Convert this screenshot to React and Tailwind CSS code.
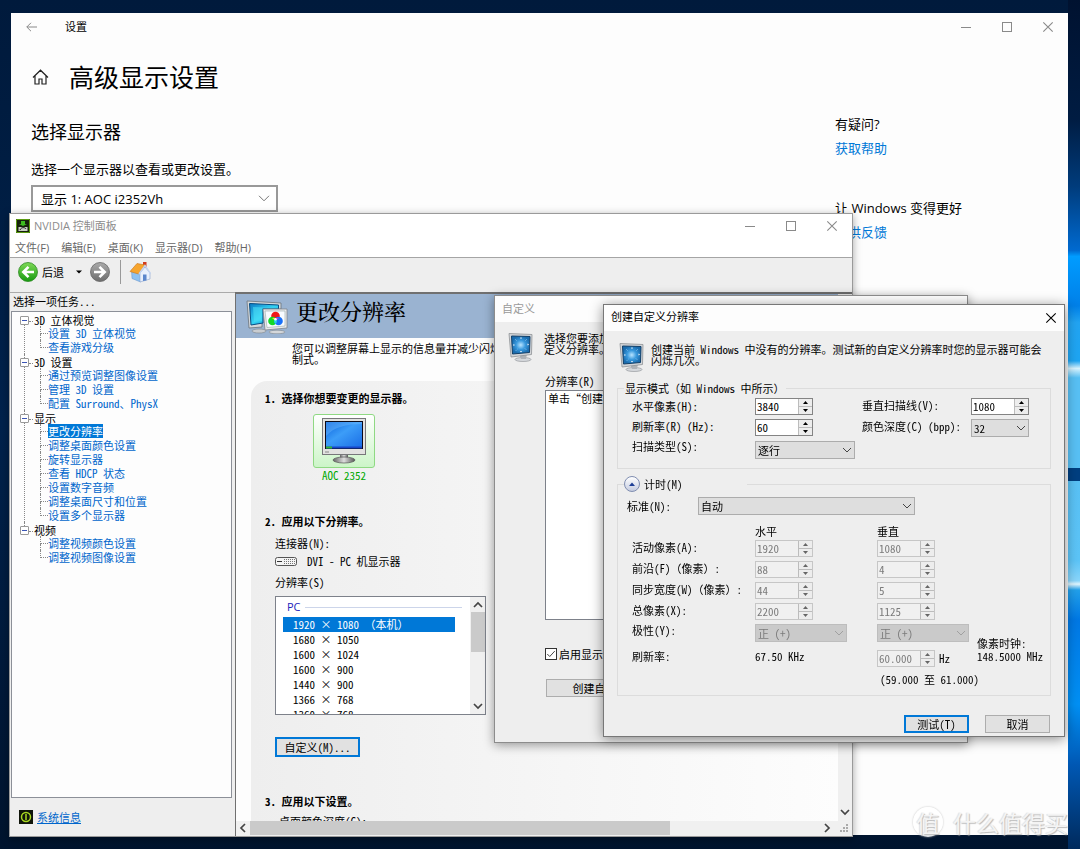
import React from "react";

const SONG = "font-['Noto_Sans_Mono_CJK_SC','Noto_Sans_CJK_SC',sans-serif]";
const UI = "font-['Open_Sans','Noto_Sans_CJK_SC',sans-serif]";

const tasks = [
  { name: "3D 立体视觉", items: ["设置 3D 立体视觉", "查看游戏分级"] },
  { name: "3D 设置", items: ["通过预览调整图像设置", "管理 3D 设置", "配置 Surround、PhysX"] },
  {
    name: "显示",
    items: ["更改分辨率", "调整桌面颜色设置", "旋转显示器", "查看 HDCP 状态", "设置数字音频", "调整桌面尺寸和位置", "设置多个显示器"],
  },
  { name: "视频", items: ["调整视频颜色设置", "调整视频图像设置"] },
];

const resolutions = ["1920 × 1080 （本机）", "1680 × 1050", "1600 × 1024", "1600 × 900", "1440 × 900", "1366 × 768", "1360 × 768"];

function Chevron({ dir = "down", thin = false, className = "" }) {
  const d = { down: "M1 3l4 4 4-4", up: "M1 7l4-4 4 4", left: "M7 1L3 5l4 4", right: "M3 1l4 4-4 4" }[dir];
  return (
    <svg viewBox="0 0 10 10" className={`size-2.5 ${className}`} fill="none" stroke="currentColor" strokeWidth={thin ? 1 : 1.7}>
      <path d={d} />
    </svg>
  );
}

function CaptionButtons() {
  return (
    <div className="flex items-center gap-[31px] text-[#8a8a8a]">
      <button aria-label="最小化" className="flex size-2.5 items-center">
        <svg viewBox="0 0 10 10" className="size-2.5" stroke="currentColor"><path d="M0 5.5h10" /></svg>
      </button>
      <button aria-label="最大化" className="size-2.5 border border-[#8a8a8a]" />
      <button aria-label="关闭"><CloseGlyph /></button>
    </div>
  );
}

function CloseGlyph({ className = "" }) {
  return (
    <svg viewBox="0 0 10 10" className={`size-2.5 overflow-visible ${className}`} stroke="currentColor" strokeWidth="1.1">
      <path d="M.3.3l9.4 9.4M9.7.3L.3 9.7" />
    </svg>
  );
}

function Spin({ id, label, value, disabled = false, autoFocus = false }) {
  return (
    <div className={`flex h-[17px] w-[58px] border ${disabled ? "border-[#c6c6c6] bg-[#f0f0f0] text-[#7b7b7b]" : "border-[#848484] bg-white"}`}>
      <input id={id} aria-label={label} defaultValue={value} disabled={disabled} autoFocus={autoFocus} className="w-0 min-w-0 flex-1 bg-transparent pl-px text-[11px] leading-[15px] outline-none" />
      <div className="flex w-3.5 flex-col border-l border-[#bcbcbc] bg-[#ededed]">
        <button aria-label="增加" disabled={disabled} className="flex flex-1 items-center justify-center border-b border-[#bcbcbc]">
          <svg viewBox="0 0 5 3" className="h-[3px] w-[5px]" fill={disabled ? "#666" : "#000"}><path d="M0 3h5L2.5 0z" /></svg>
        </button>
        <button aria-label="减少" disabled={disabled} className="flex flex-1 items-center justify-center">
          <svg viewBox="0 0 5 3" className="h-[3px] w-[5px]" fill={disabled ? "#666" : "#000"}><path d="M0 0h5L2.5 3z" /></svg>
        </button>
      </div>
    </div>
  );
}

function Combo({ id, label, value, width, disabled = false }) {
  return (
    <div className={`relative h-[18px] ${width}`}>
      <select
        id={id}
        aria-label={label}
        disabled={disabled}
        className={`size-full appearance-none border pl-0.5 text-[11px] leading-4 opacity-100 ${disabled ? "border-[#bdbdbd] bg-[#cacaca] text-[#7b7b7b]" : "border-[#acacac] bg-[#dedede] text-black"}`}
      >
        <option>{value}</option>
      </select>
      <Chevron thin className={`pointer-events-none absolute right-[3px] top-1 ${disabled ? "text-[#a0a0a0]" : "text-[#444]"}`} />
    </div>
  );
}

function SizeIcon() {
  return (
    <svg viewBox="0 0 26 30" className="h-[30px] w-[26px] shrink-0">
      <defs>
        <radialGradient id="sizeGlow"><stop offset="0" stopColor="#b8e4ff" /><stop offset=".5" stopColor="#3a9ade" /><stop offset="1" stopColor="#1a6cae" /></radialGradient>
      </defs>
      <ellipse cx="15" cy="27.5" rx="8" ry="2" fill="#d5d8dc" stroke="#8b8f94" strokeWidth=".6" />
      <path d="M11 22h8l-1 5h-5z" fill="#aeb2b7" />
      <path d="M1 1.5l23 1-.5 20L3 25z" fill="#d3d5d8" stroke="#8e9296" strokeWidth=".8" />
      <path d="M3.5 4l18.5.5-.5 16L4.5 22z" fill="url(#sizeGlow)" stroke="#123f68" strokeWidth="1" />
      <path d="M13 5l1 1.500h-2zM13 20.500l1-1.500h-2zM4.800 13l1.500-1v2zM21 12.500l-1.500-1v2z" fill="#fff" />
      <path d="M7 7l2 2M19 7l-2 2M7.500 19l2-2M18.500 18l-2-2" stroke="#9fd4fa" strokeDasharray="1 1" strokeWidth=".7" />
    </svg>
  );
}

function HeaderIcon() {
  return (
    <svg viewBox="0 0 42 34" className="h-[34px] w-[42px] shrink-0">
      <defs>
        <linearGradient id="hdrScreen" x1="0" y1="0" x2="1" y2="1"><stop offset="0" stopColor="#0b7ac4" /><stop offset=".5" stopColor="#35d3f3" /><stop offset="1" stopColor="#0a86d0" /></linearGradient>
      </defs>
      <path d="M1 1l34 2v6L16 10v17L3 28z" fill="#d4d8db" stroke="#6b737b" strokeWidth=".8" />
      <path d="M3.500 3.500l29 1.500v4H17v14L5 25z" fill="url(#hdrScreen)" stroke="#084d83" />
      <path d="M7 7l22 1H16v13l-8 1z" fill="#4be0f6" opacity=".6" />
      <path d="M17 9h24v19l-22 2z" fill="#e8eaec" stroke="#7d848b" strokeWidth=".8" />
      <path d="M19 11h20v15l-18 1.500z" fill="#f8fbff" stroke="#9aa" strokeWidth=".6" />
      <circle cx="29.500" cy="16" r="4.300" fill="#f01818" />
      <circle cx="26.500" cy="21" r="4.300" fill="#12d828" />
      <circle cx="32.500" cy="21" r="4.300" fill="#1870f8" />
      <path d="M26 18.200a4.300 4.300 0 0 1 3.500 0l-1.300 1.600z" fill="#f5e020" />
      <path d="M33 18.200a4.300 4.300 0 0 0-3.500 0l1.300 1.600z" fill="#d030d8" />
      <path d="M29.500 18a4.300 4.300 0 0 0 0 6 4.300 4.300 0 0 0 0-6z" fill="#28d8e0" />
      <circle cx="29.500" cy="19.300" r="1.200" fill="#fff" />
      <ellipse cx="13" cy="31" rx="7" ry="2" fill="#c9cdd1" stroke="#7c848c" strokeWidth=".6" />
      <ellipse cx="31" cy="32" rx="8" ry="1.800" fill="#d5d8db" stroke="#7c848c" strokeWidth=".6" />
    </svg>
  );
}

function DisplayIcon() {
  return (
    <svg viewBox="0 0 44 46" className="h-[46px] w-11">
      <defs>
        <linearGradient id="lcd" x1="0" y1="0" x2="1" y2="1"><stop offset="0" stopColor="#0b63dd" /><stop offset=".45" stopColor="#3c9df8" /><stop offset="1" stopColor="#1a6ee6" /></linearGradient>
        <linearGradient id="stand" x1="0" x2="1"><stop offset="0" stopColor="#666" /><stop offset=".5" stopColor="#ddd" /><stop offset="1" stopColor="#555" /></linearGradient>
      </defs>
      <rect x=".5" y=".5" width="43" height="36" fill="#e2e2e0" stroke="#77777a" />
      <rect x="3" y="3" width="38" height="28" fill="#0a0a18" />
      <rect x="4" y="4" width="36" height="25" fill="url(#lcd)" />
      <path d="M4 18c8-9 20-12 36-12V4H4z" fill="#7cc2ff" opacity=".35" />
      <path d="M4 28.500h36v2H4z" fill="#1746c8" />
      <path d="M4 28.500h6v2H4z" fill="#35b53a" />
      <path d="M3 34h4" stroke="#888" />
      <path d="M18 37h8v4h-8z" fill="url(#stand)" />
      <ellipse cx="22" cy="42" rx="11" ry="3" fill="url(#stand)" stroke="#555" strokeWidth=".7" />
    </svg>
  );
}

function Wallpaper() {
  return (
    <div className="absolute inset-0 bg-gradient-to-b from-[#001a3c] via-[#00224c] to-[#00142e]">
      <svg viewBox="0 0 12 849" preserveAspectRatio="none" className="absolute right-0 top-0 h-full w-3">
        <defs>
          <linearGradient id="beam" x1="0" y1="0" x2="0" y2="1">
            <stop offset="0" stopColor="#001230" />
            <stop offset=".14" stopColor="#001c42" />
            <stop offset=".22" stopColor="#003c7c" />
            <stop offset=".295" stopColor="#006ad0" />
            <stop offset=".302" stopColor="#009cff" />
            <stop offset=".36" stopColor="#0080e8" />
            <stop offset=".38" stopColor="#22a4f2" />
            <stop offset=".425" stopColor="#1ea5f2" />
            <stop offset=".434" stopColor="#d8f4ff" />
            <stop offset=".445" stopColor="#58c0f4" />
            <stop offset=".54" stopColor="#58c0f4" />
            <stop offset=".66" stopColor="#5cc4f7" />
            <stop offset=".684" stopColor="#8ad6fb" />
            <stop offset=".688" stopColor="#e0f6ff" />
            <stop offset=".695" stopColor="#22a0ea" />
            <stop offset=".73" stopColor="#0078e4" />
            <stop offset=".83" stopColor="#0090f4" />
            <stop offset=".9" stopColor="#0058b4" />
            <stop offset="1" stopColor="#002a5c" />
          </linearGradient>
        </defs>
        <path d="M0 0h12v849H0z" fill="url(#beam)" />
        <path d="M0 468h12v13H0z" fill="#003f80" />
      </svg>
    </div>
  );
}

function SettingsWindow() {
  return (
    <section className={`absolute bottom-[14px] left-[11px] right-3 top-[13px] bg-[#fdfdfd] text-[13px] text-black ${UI}`}>
      <header className="flex h-7 items-center justify-between pl-[15px] pr-[15px]">
        <div className="flex items-center gap-7">
          <button aria-label="返回" className="text-[#8a8a8a]">
            <svg viewBox="0 0 11 10" className="h-2.5 w-[11px]" fill="none" stroke="currentColor"><path d="M11 5H.8M5 .8L.8 5 5 9.200" /></svg>
          </button>
          <span className="pt-px text-[11px]">设置</span>
        </div>
        <CaptionButtons />
      </header>
      <div className="flex justify-between pl-5">
        <div className="pt-4">
          <div className="flex items-center gap-5 pl-px">
            <svg viewBox="0 0 17 16" className="h-4 w-[17px]" fill="none" stroke="#222" strokeWidth="1.200"><path d="M1 8.500L8.500 1.200 16 8.500M3 7v8h4v-5h3v5h4V7" /></svg>
            <h1 className="text-[25px] leading-10">高级显示设置</h1>
          </div>
          <h2 className="mt-[23px] text-lg leading-6">选择显示器</h2>
          <label htmlFor="monitor" className="mt-[15px] block leading-5">选择一个显示器以查看或更改设置。</label>
          <div className="relative mt-1.5 h-[27px] w-[247px]">
            <select id="monitor" className="size-full appearance-none border-2 border-[#999] bg-white pl-2 text-[13px] leading-5 text-black">
              <option>显示 1: AOC i2352Vh</option>
            </select>
            <svg viewBox="0 0 12 7" className="pointer-events-none absolute right-2 top-2.5 h-[7px] w-3" fill="none" stroke="#777"><path d="M1 .8l5 5 5-5" /></svg>
          </div>
        </div>
        <aside className="w-[233px] pt-[73px] leading-5">
          <p>有疑问?</p>
          <a href="#help" className="mt-1 block text-[#0078d7]">获取帮助</a>
          <p className="mt-10">让 Windows 变得更好</p>
          <a href="#feedback" className="mt-1 block text-[#0078d7]">提供反馈</a>
        </aside>
      </div>
    </section>
  );
}

function TaskTree() {
  return (
    <ul className="flex-1 border border-[#8c9098] bg-[#fdfdfd] pl-2 leading-[14px]">
      {tasks.map((group, g) => (
        <li key={group.name} className="flex">
          <span className="flex w-[9px] flex-col items-center">
            <span className={`h-1 border-l border-dotted ${g ? "border-[#888]" : "border-transparent"}`} />
            <button aria-label="折叠" className="flex size-[9px] shrink-0 items-center justify-center rounded-[1px] border border-[#999] bg-white"><span className="h-px w-[5px] bg-[#3b55b5]" /></button>
            {g < tasks.length - 1 && <span className="flex-1 border-l border-dotted border-[#888]" />}
          </span>
          <div>
            <div className="flex h-3.5 items-end leading-3"><span className="mb-1 mr-px w-1 border-t border-dotted border-[#888]" />{group.name}</div>
            <ul className="pl-[11px]">
              {group.items.map((item, i) => (
                <li key={item} className="flex h-3.5">
                  <span className="flex w-2 flex-col">
                    <span className="h-2 border-b border-l border-dotted border-[#888]" />
                    {i < group.items.length - 1 && <span className="flex-1 border-l border-dotted border-[#888]" />}
                  </span>
                  <a href="#task" className={item === "更改分辨率" ? "bg-[#0078d7] text-white" : "text-[#0066cc]"}>{item}</a>
                </li>
              ))}
            </ul>
          </div>
        </li>
      ))}
    </ul>
  );
}

function NvidiaWindow() {
  return (
    <section className={`absolute bottom-3 left-[9px] top-[213px] flex w-[844px] flex-col border border-[#9a9a9a] bg-[#eee] text-[11px] text-black shadow-[0_2px_8px_rgba(0,0,0,0.35)] ${SONG}`}>
      <header className={`flex h-[26px] items-center justify-between bg-white pb-0.5 pl-1.5 pr-[15px] text-[#8c8c8c] ${UI}`}>
        <div className="flex items-center gap-1">
          <svg viewBox="0 0 14 14" className="size-3.5"><path d="M0 0h14v14H0z" fill="#16210c" /><path d="M.5.5h13v13H.5z" fill="none" stroke="#5a9a10" /><path d="M5 2h4v3h2L7 7 3 5h2z" fill="#3dbb20" /><path d="M2.500 8h9v4h-9z" fill="#c8ccc4" /><path d="M4 11c1-3 5-3 6-1" stroke="#222" fill="none" /></svg>
          <span>NVIDIA 控制面板</span>
        </div>
        <CaptionButtons />
      </header>
      <nav className={`flex h-[17px] items-center gap-3 bg-white pb-px pl-[5px] text-[#666] ${UI}`}>
        <button>文件(F)</button><button>编辑(E)</button><button>桌面(K)</button><button>显示器(D)</button><button>帮助(H)</button>
      </nav>
      <div className="flex h-[35px] items-center border-t border-[#a5a5a5] pb-1.5 pl-2">
        <button className="flex items-center gap-1">
          <svg viewBox="0 0 20 20" className="size-5">
            <defs><linearGradient id="go" x1="0" y1="0" x2="0" y2="1"><stop offset="0" stopColor="#7ed957" /><stop offset="1" stopColor="#179a10" /></linearGradient></defs>
            <circle cx="10" cy="10" r="9.500" fill="url(#go)" stroke="#2c8a22" strokeWidth=".8" />
            <path d="M10.500 4.800L5.300 10l5.200 5.200M5.500 10H16" fill="none" stroke="#fff" strokeWidth="2.600" />
          </svg>
          后退
        </button>
        <button aria-label="历史" className="ml-3"><svg viewBox="0 0 6 4" className="h-1 w-1.5"><path d="M0 .5h6l-3 3z" /></svg></button>
        <button aria-label="前进" className="ml-2">
          <svg viewBox="0 0 20 20" className="size-5">
            <defs><linearGradient id="off" x1="0" y1="0" x2="0" y2="1"><stop offset="0" stopColor="#aaa" /><stop offset="1" stopColor="#6e6e6e" /></linearGradient></defs>
            <circle cx="10" cy="10" r="9.500" fill="url(#off)" stroke="#666" strokeWidth=".8" />
            <path d="M9.500 4.800l5.200 5.200-5.200 5.200M14.500 10H4" fill="none" stroke="#fff" strokeWidth="2.600" />
          </svg>
        </button>
        <span className="ml-2.5 h-6 w-px bg-[#999]" />
        <button aria-label="主页" className="ml-2">
          <svg viewBox="0 0 22 22" className="size-[22px]">
            <path d="M14 1h3.500v6H14z" fill="#d23a1c" />
            <path d="M2.500 9l5-1 4 5v8L3 17.500z" fill="#8ec2f2" stroke="#5f8fc8" strokeWidth=".5" />
            <path d="M11 12l5-6 5 6v6L11 21z" fill="#e7effc" stroke="#8aa3cc" strokeWidth=".6" />
            <path d="M1 10.500L8 2.500l8 1.500L9.500 13z" fill="#f6a52e" stroke="#c9731a" strokeWidth=".6" />
            <path d="M10 13l6-8.500 5.500 8" fill="none" stroke="#c2d3ef" strokeWidth="1.500" />
            <path d="M14 13.500h3.500v6l-3.500.5z" fill="#5a86cc" />
          </svg>
        </button>
      </div>
      <div className="flex min-h-0 flex-1">
        <div className="flex w-[225px] shrink-0 flex-col border-t border-[#aaa] pl-px pr-[3px]">
          <h2 className="h-[18px] pl-0.5 leading-4">选择一项任务...</h2>
          <TaskTree />
          <footer className="flex h-[38px] items-center gap-1 pl-2">
            <svg viewBox="0 0 14 14" className="size-3.5"><path d="M0 0h14v14H0z" fill="#10150a" /><circle cx="7" cy="7" r="4.500" fill="none" stroke="#a8d820" strokeWidth="1.500" /><path d="M7 4v6" stroke="#a8d820" strokeWidth="1.500" /></svg>
            <a href="#info" className="text-[#0066cc] underline">系统信息</a>
          </footer>
        </div>
        <main className="flex min-w-0 flex-1 flex-col border-l border-t-2 border-[#707070] bg-[#fdfdfd]">
          <div className="flex min-h-0 flex-1">
            <div className="min-w-0 flex-1 overflow-hidden">
              <header className="flex h-11 items-center gap-2 bg-[#9ab3d1] pl-2.5 pt-0.5">
                <HeaderIcon />
                <h1 className="pb-3 font-['Noto_Serif_CJK_SC','Noto_Sans_CJK_SC',serif] text-[22px] font-medium leading-8">更改分辨率</h1>
              </header>
              <p className="whitespace-nowrap pl-14 pt-[5px] leading-[11px]">您可以调整屏幕上显示的信息量并减少闪烁。您还可以选择高清电视（HDTV）<br />制式。</p>
              <div className="ml-[15px] mt-4 h-[520px] rounded-tl-2xl bg-gradient-to-r from-[#eee] to-[#fdfdfd] pl-3.5 pt-[9px]">
                <h3 className="whitespace-pre font-bold leading-4">1. 选择你想要变更的显示器。</h3>
                <button className="ml-12 mt-2 block text-[#00a800]">
                  <span className="mx-auto flex h-[54px] w-[62px] items-center justify-center rounded-[3px] border border-[#8fd983] bg-gradient-to-b from-white to-[#ccf5c8]"><DisplayIcon /></span>
                  <span className="block leading-[14px]">AOC 2352</span>
                </button>
                <h3 className="mt-[31px] whitespace-pre font-bold leading-4">2. 应用以下分辨率。</h3>
                <div className="pl-2.5">
                  <p className="mt-1.5 leading-4">连接器(N):</p>
                  <p className="mt-0.5 flex items-center gap-2.5 leading-4">
                    <svg viewBox="0 0 22 9" className="h-[9px] w-[22px]"><rect x=".5" y=".5" width="21" height="8" rx="2" fill="#f4f4f4" stroke="#555" /><path d="M2 4.500h5" stroke="#333" /><path d="M9 2.500h11M9 4.500h11M9 6.500h11" stroke="#777" strokeDasharray="1 1" /></svg>
                    DVI - PC 机显示器
                  </p>
                  <p className="mt-[5px] leading-4">分辨率(S)</p>
                  <div className="mt-1.5 flex h-[119px] w-[211px] border border-[#7d818a] bg-white">
                    <div className="flex-1 overflow-hidden pl-[7px]">
                      <div className={`flex h-5 items-center gap-1 pl-1 text-[#2222bb] ${UI}`}>PC<span className="mr-2 h-px flex-1 bg-[#ccd5ea]" /></div>
                      <ul>
                        {resolutions.map((r, i) => (
                          <li key={r} className={`mr-[15px] h-[15px] whitespace-pre pl-2.5 leading-[15px] ${i ? "" : "bg-[#0078d7] text-white"}`}>{r}</li>
                        ))}
                      </ul>
                    </div>
                    <div className="flex w-[15px] flex-col items-center bg-[#f0f0f0] py-[3px] text-[#444]">
                      <Chevron dir="up" />
                      <span className="mt-0.5 h-10 w-3.5 bg-[#cacaca]" />
                      <Chevron className="mt-auto" />
                    </div>
                  </div>
                  <button className="mt-[22px] h-5 w-[85px] border-2 border-[#0078d7] bg-[#e1e1e1] leading-4">自定义(M)...</button>
                </div>
                <h3 className="mt-9 whitespace-pre font-bold leading-4">3. 应用以下设置。</h3>
                <p className="mt-1 pl-3.5 leading-4">桌面颜色深度(C):</p>
              </div>
            </div>
            <div className="flex w-3.5 flex-col items-center justify-end bg-[#f0f0f0] pb-1 text-[#444]"><Chevron /></div>
          </div>
          <div className="flex h-[15px] items-center bg-[#f0f0f0] pb-px text-[#444]">
            <Chevron dir="left" className="mx-0.5 shrink-0" />
            <span className="h-full w-[420px] bg-[#cacaca]" />
            <Chevron dir="right" className="ml-auto mr-2" />
            <svg viewBox="0 0 8 8" className="mr-1 size-2" fill="#aaa"><path d="M6 0h2v2H6zM3 3h2v2H3zM6 3h2v2H6zM0 6h2v2H0zM3 6h2v2H3zM6 6h2v2H6z" /></svg>
          </div>
        </main>
      </div>
    </section>
  );
}

function CustomizeDialog() {
  return (
    <section className={`absolute left-[494px] top-[295px] h-[448px] w-[474px] border border-[#8c8c8c] bg-[#eee] text-[11px] text-black shadow-[0_2px_10px_rgba(0,0,0,0.4)] ${SONG}`}>
      <header className={`flex h-[26px] items-center bg-[#fdfdfd] pl-[7px] text-[#999] ${UI}`}>自定义</header>
      <div className="flex gap-2.5 pl-[13px] pt-2.5">
        <SizeIcon />
        <p className="whitespace-nowrap pt-px leading-[11px]">选择您要添加到显示列表中的分辨率。您还可以创建自<br />定义分辨率。</p>
      </div>
      <div className="pl-[50px] pr-4">
        <p className="mt-[11px] leading-4">分辨率(R)</p>
        <div className="mt-px h-[230px] border border-[#7d818a] bg-white pl-0.5 leading-[14px]">单击“创建自定义分辨率”以添加新的分辨率。</div>
        <label className="mt-[26px] flex h-4 items-center gap-0.5"><input type="checkbox" defaultChecked className="peer sr-only" /><svg viewBox="0 0 12 12" className="size-3 border border-[#333] bg-white" fill="none" stroke="#222"><path d="M1.500 6l3 3L10.500 2.500" /></svg>启用显示器未显示的分辨率(E)</label>
        <button className="ml-px mt-[17px] h-[18px] w-[174px] border border-[#adadad] bg-[#e1e1e1] leading-4">创建自定义分辨率(C)...</button>
      </div>
    </section>
  );
}

const timingRows = [
  ["active", "活动像素(A):", "1920", "1080"],
  ["porch", "前沿(F)（像素）:", "88", "4"],
  ["sync", "同步宽度(W)（像素）:", "44", "5"],
  ["total", "总像素(X):", "2200", "1125"],
];

function CreateDialog() {
  return (
    <section className={`absolute left-[603px] top-[304px] w-[462px] border border-[#777] bg-[#eee] pb-[3px] text-[11px] text-black shadow-[0_2px_12px_rgba(0,0,0,0.45)] ${SONG}`}>
      <header className={`flex h-[26px] items-center justify-between bg-[#fdfdfd] pb-px pl-[7px] pr-2 ${UI}`}>
        <h2>创建自定义分辨率</h2>
        <button aria-label="关闭"><CloseGlyph /></button>
      </header>
      <div className="flex gap-1.5 pl-[15px] pt-[11px]">
        <SizeIcon />
        <p className="whitespace-nowrap pt-0.5 leading-[11px]">创建当前 Windows 中没有的分辨率。测试新的自定义分辨率时您的显示器可能会<br />闪烁几次。</p>
      </div>
      <fieldset className="mx-[13px] mt-2 h-[89px] border border-[#dcdcdc] px-1.5">
        <legend className="px-px leading-4">显示模式（如 Windows 中所示）</legend>
        <div className="flex pl-2 pt-0.5">
          <div className="grid grid-cols-[123px_100px] grid-rows-[21px_22px_22px]">
            <label htmlFor="hpx" className="leading-4">水平像素(H):</label><Spin id="hpx" value="3840" autoFocus />
            <label htmlFor="rate" className="leading-[14px]">刷新率(R) (Hz):</label><Spin id="rate" value="60" />
            <label htmlFor="scan" className="leading-[10px]">扫描类型(S):</label><Combo id="scan" value="逐行" width="w-[100px]" />
          </div>
          <div className="ml-[7px] grid grid-cols-[109px_58px] grid-rows-[21px_22px_22px]">
            <label htmlFor="vln" className="leading-[14px]">垂直扫描线(V):</label><Spin id="vln" value="1080" />
            <label htmlFor="bpp" className="leading-[14px]">颜色深度(C) (bpp):</label><Combo id="bpp" value="32" width="w-[58px]" />
          </div>
        </div>
      </fieldset>
      <fieldset className="mx-[13px] mt-1.5 border border-[#dcdcdc] px-1.5 pb-2">
        <legend className="flex h-[18px] items-center gap-1 pr-16">
          <button aria-label="折叠计时" className="flex size-4 items-center justify-center rounded-full border border-[#7f8db0] bg-gradient-to-b from-white to-[#c5cce0]"><svg viewBox="0 0 6 4" className="h-1 w-1.5" fill="#1f3f96"><path d="M0 4h6L3 .500z" /></svg></button>
          计时(M)
        </legend>
        <div className="flex items-center pl-[3px] pt-1">
          <label htmlFor="std" className="w-[71px]">标准(N):</label>
          <Combo id="std" value="自动" width="w-[217px]" />
        </div>
        <div className="grid grid-cols-[123px_122px_100px_auto] pl-2 pt-2">
          <span /><span className="h-[17px] leading-4">水平</span><span className="leading-4">垂直</span><span />
          {timingRows.map(([id, label, h, v]) => (
            <React.Fragment key={id}>
              <label htmlFor={id} className="h-[21px] leading-[14px]">{label}</label>
              <Spin id={id} value={h} disabled />
              <Spin label={label} value={v} disabled />
              <span />
            </React.Fragment>
          ))}
          <label htmlFor="pol" className="h-[26px] leading-3">极性(Y):</label>
          <Combo id="pol" value="正 (+)" width="w-[92px]" disabled />
          <Combo label="垂直极性" value="正 (+)" width="w-[92px]" disabled />
          <span className="self-end leading-[13px]">像素时钟:</span>
          <span className="leading-[13px]">刷新率:</span>
          <span className="leading-[13px]">67.50 KHz</span>
          <span className="flex gap-1 leading-4"><Spin label="刷新率" value="60.000" disabled />Hz</span>
          <span className="whitespace-nowrap leading-[13px]">148.5000 MHz</span>
          <span className="col-span-2" />
          <span className="col-span-2 pl-[3px] pt-1 leading-4">(59.000 至 61.000)</span>
        </div>
      </fieldset>
      <footer className="flex justify-end gap-4 pr-3.5 pt-[19px]">
        <button className="h-[18px] w-[65px] border-2 border-[#0078d7] bg-[#e1e1e1] leading-[14px]">测试(T)</button>
        <button className="h-[18px] w-[65px] border border-[#adadad] bg-[#e1e1e1] leading-4">取消</button>
      </footer>
    </section>
  );
}

export default function App() {
  return (
    <div className="relative min-h-screen overflow-hidden">
      <Wallpaper />
      <SettingsWindow />
      <NvidiaWindow />
      <CustomizeDialog />
      <CreateDialog />
      <div className="absolute bottom-[11px] right-3 flex items-center gap-2.5 whitespace-nowrap font-['Noto_Sans_CJK_SC',sans-serif] text-[23px] leading-8 text-[#f4f4f4] [text-shadow:1px_1px_1px_#bbb,-1px_0_1px_#ddd]">
        <span className="flex size-[30px] items-center justify-center rounded-full bg-white/90 shadow-[0_0_2px_#bbb]">值</span>
        什么值得买
      </div>
    </div>
  );
}
